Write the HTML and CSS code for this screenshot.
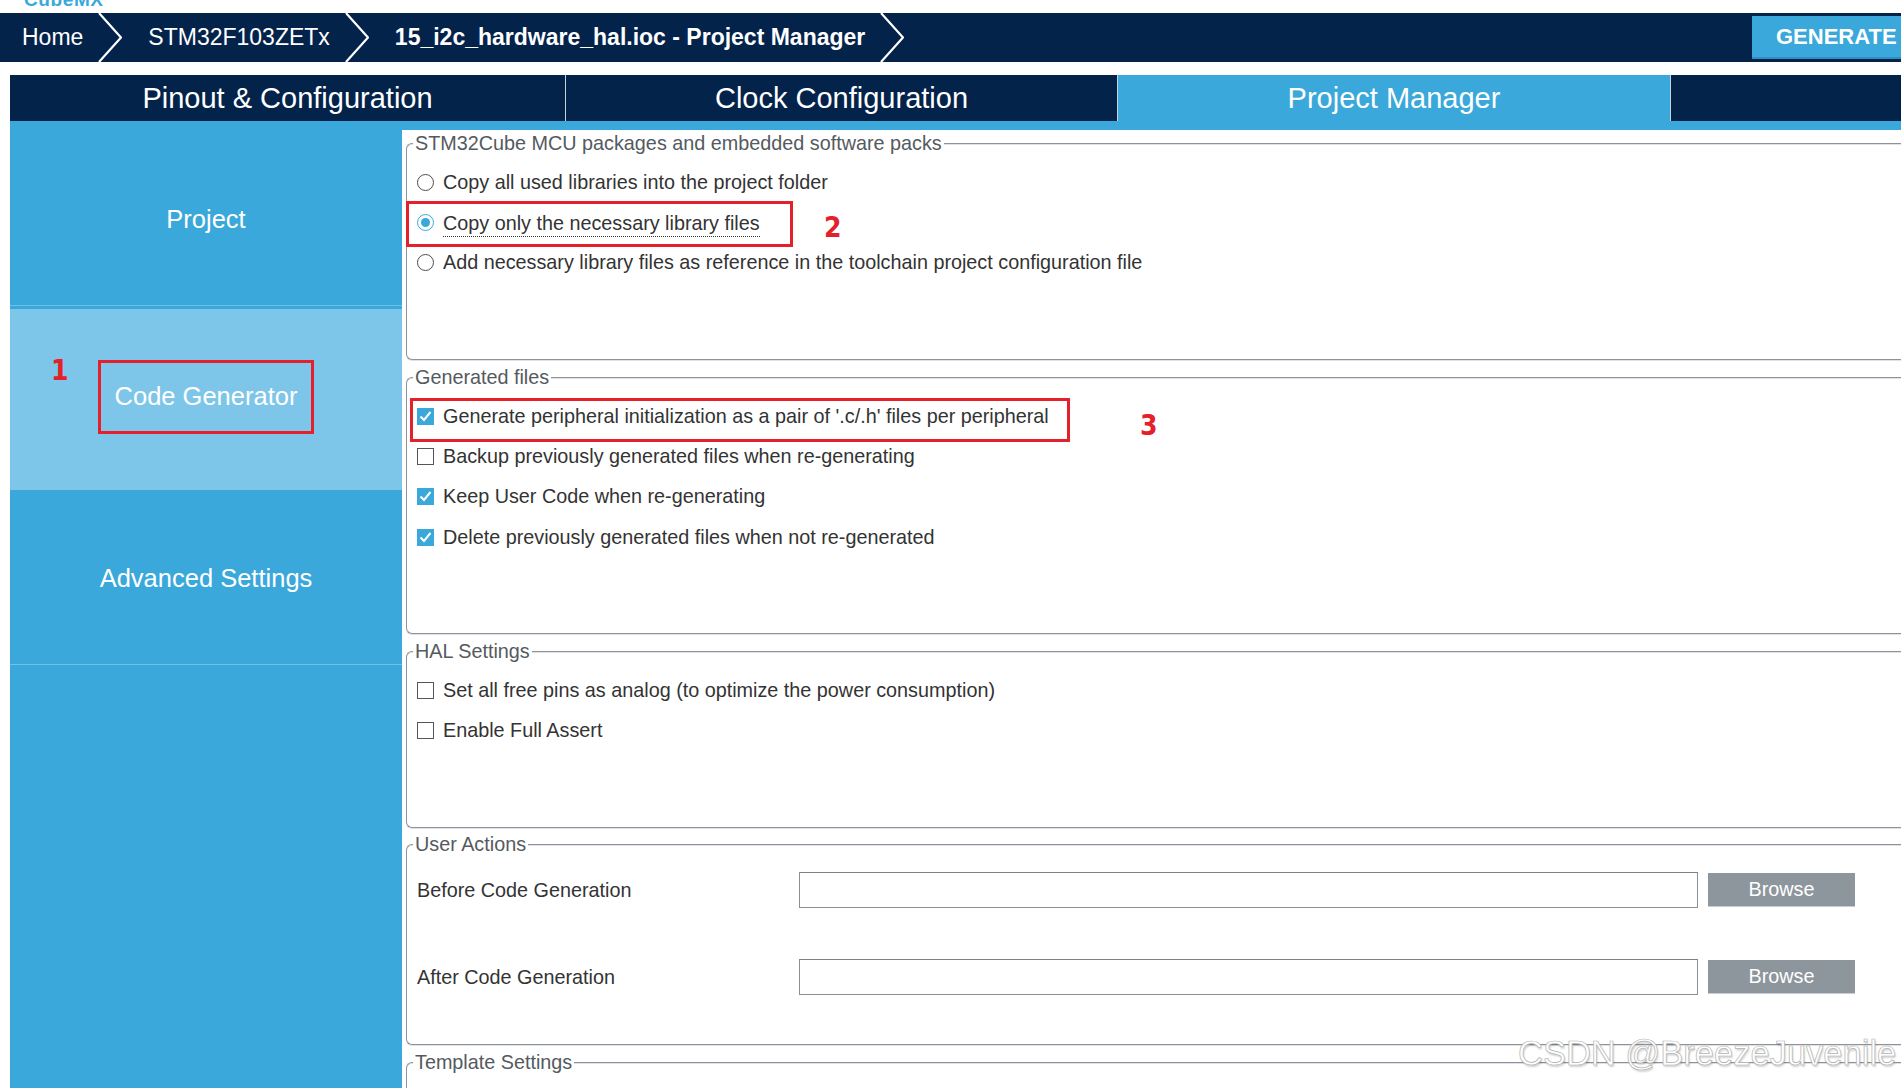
FILE: index.html
```html
<!DOCTYPE html>
<html lang="en">
<head>
<meta charset="utf-8">
<title>STM32CubeMX - Project Manager</title>
<link rel="stylesheet" href="styles.css">
</head>
<body>
<div class="logo-strip"><span class="logo">CubeMX</span></div>

<header class="crumbs">
  <div class="crumb first">Home</div>
  <svg class="chev" viewBox="0 0 24 49"><polyline points="1,0 23,24.5 1,49"/></svg>
  <div class="crumb">STM32F103ZETx</div>
  <svg class="chev" viewBox="0 0 24 49"><polyline points="1,0 23,24.5 1,49"/></svg>
  <div class="crumb current">15_i2c_hardware_hal.ioc - Project Manager</div>
  <svg class="chev" viewBox="0 0 24 49"><polyline points="1,0 23,24.5 1,49"/></svg>
  <div class="spacer"></div>
  <div class="generate">GENERATE CODE</div>
</header>

<nav class="tabs">
  <div class="tab">Pinout &amp; Configuration</div>
  <div class="tab">Clock Configuration</div>
  <div class="tab active">Project Manager</div>
  <div class="tab"></div>
</nav>
<div class="tab-strip"></div>

<main class="main">
  <aside class="sidebar">
    <div class="nav-item project">Project</div>
    <div class="nav-sep"></div>
    <div class="nav-item codegen selected">
      <span class="anno anno-1">1</span>
      <span class="hl-box">Code Generator</span>
    </div>
    <div class="nav-item advanced">Advanced Settings</div>
    <div class="nav-sep"></div>
    <div class="nav-rest"></div>
  </aside>

  <section class="content">
    <div class="group g1">
      <div class="legend">STM32Cube MCU packages and embedded software packs</div>
      <div class="opts">
        <div class="opt"><span class="radio"></span>Copy all used libraries into the project folder</div>
        <div class="opt">
          <span class="radio on"></span><span class="dotted">Copy only the necessary library files</span>
          <span class="mark mark-2"></span>
          <span class="anno anno-2">2</span>
        </div>
        <div class="opt"><span class="radio"></span>Add necessary library files as reference in the toolchain project configuration file</div>
      </div>
    </div>

    <div class="group g2">
      <div class="legend">Generated files</div>
      <div class="opts">
        <div class="opt">
          <span class="check on"><svg viewBox="0 0 17 17"><polyline points="3.5,8.5 7,12 13.5,4"/></svg></span>Generate peripheral initialization as a pair of '.c/.h' files per peripheral
          <span class="mark mark-3"></span>
          <span class="anno anno-3">3</span>
        </div>
        <div class="opt"><span class="check"></span>Backup previously generated files when re-generating</div>
        <div class="opt"><span class="check on"><svg viewBox="0 0 17 17"><polyline points="3.5,8.5 7,12 13.5,4"/></svg></span>Keep User Code when re-generating</div>
        <div class="opt"><span class="check on"><svg viewBox="0 0 17 17"><polyline points="3.5,8.5 7,12 13.5,4"/></svg></span>Delete previously generated files when not re-generated</div>
      </div>
    </div>

    <div class="group g3">
      <div class="legend">HAL Settings</div>
      <div class="opts">
        <div class="opt"><span class="check"></span>Set all free pins as analog (to optimize the power consumption)</div>
        <div class="opt"><span class="check"></span>Enable Full Assert</div>
      </div>
    </div>

    <div class="group g4">
      <div class="legend">User Actions</div>
      <div class="ua">
        <div class="ua-row">
          <span class="ua-label">Before Code Generation</span>
          <span class="ua-input"></span>
          <span class="browse">Browse</span>
        </div>
        <div class="ua-row">
          <span class="ua-label">After Code Generation</span>
          <span class="ua-input"></span>
          <span class="browse">Browse</span>
        </div>
      </div>
    </div>

    <div class="group g5">
      <div class="legend">Template Settings</div>
    </div>
  </section>
</main>

<div class="watermark">CSDN @BreezeJuvenile</div>
</body>
</html>
```

FILE: styles.css
```css
* { box-sizing: border-box; margin: 0; padding: 0; }

html, body {
  width: 1901px;
  height: 1088px;
  overflow: hidden;
  background: #ffffff;
  font-family: "Liberation Sans", Arial, sans-serif;
}

body { position: relative; }

/* top logo strip (cut off) */
.logo-strip {
  height: 13px;
  overflow: hidden;
  padding-left: 24px;
}
.logo {
  display: block;
  font-size: 19px;
  line-height: 19px;
  font-weight: bold;
  color: #39a9dc;
  margin-top: -10px;
  letter-spacing: 0.6px;
}

/* breadcrumb bar */
.crumbs {
  display: flex;
  height: 49px;
  background: #03234b;
  color: #ffffff;
  font-size: 23px;
  margin-right: -111px;
}
.crumb {
  display: flex;
  align-items: center;
  padding: 0 15px 0 26px;
  white-space: nowrap;
}
.crumb.first { padding-left: 22px; }
.crumb.current { font-weight: bold; }
.chev {
  width: 24px;
  height: 49px;
  flex: none;
}
.chev polyline {
  fill: none;
  stroke: #ffffff;
  stroke-width: 2.2;
}
.spacer { flex: 1; }
.generate {
  flex: none;
  width: 260px;
  margin: 3px 0 3px 0;
  padding-left: 24px;
  display: flex;
  align-items: center;
  background: #3aa8da;
  border-bottom: 2px solid #2e8fc0;
  font-weight: bold;
  font-size: 22px;
  white-space: nowrap;
}

/* main tabs */
.tabs {
  display: grid;
  grid-template-columns: 555px 552px 553px 1fr;
  height: 46px;
  margin: 13px 0 0 10px;
  background: #03234b;
}
.tab {
  display: flex;
  align-items: center;
  justify-content: center;
  color: #ffffff;
  font-size: 29px;
  white-space: nowrap;
}
.tab + .tab { border-left: 1px solid #c8d2dc; }
.tab.active { background: #3aa8da; }
.tab-strip {
  height: 9px;
  margin-left: 10px;
  background: #3aa8da;
}

/* main area */
.main {
  display: grid;
  grid-template-columns: 392px 1fr;
  margin-left: 10px;
  height: 958px;
}

.sidebar {
  display: flex;
  flex-direction: column;
  background: #3aa8da;
}
.nav-item {
  position: relative;
  display: flex;
  align-items: center;
  justify-content: center;
  color: #ffffff;
  font-size: 25.5px;
}
.nav-item.project { height: 175px; padding-top: 3px; }
.nav-item.codegen { height: 181px; }
.nav-item.advanced { height: 174px; padding-top: 3px; }
.nav-item.selected { background: #7ec6e9; }
.nav-sep {
  height: 4px;
  background: linear-gradient(#70c1e7 0 1.5px, #3aa8da 1.5px);
}
.nav-rest { flex: 1; }

.hl-box {
  display: flex;
  align-items: center;
  justify-content: center;
  width: 216px;
  height: 74px;
  border: 3px solid #e4202b;
  margin-top: -6px;
}

/* red annotation numbers */
.anno {
  position: absolute;
  color: #e4202b;
  font-weight: bold;
  font-size: 28px;
  line-height: 28px;
  font-family: "DejaVu Sans Condensed", "Liberation Sans", sans-serif;
}
.anno-1 { left: 41px; top: 48px; }
.anno-2 { left: 417px; top: 12px; }
.anno-3 { left: 733px; top: 16px; }

/* content groups */
.content {
  padding: 13px 0 0 4px;
  overflow: hidden;
}
.group {
  border: 1px solid #8d939a;
  border-right: 0;
  border-radius: 6px 0 0 6px;
  box-shadow: inset 0 1px 0 #dfe2e5, 0 1px 0 #dfe2e5;
  margin-bottom: 17px;
}
.g1 { height: 217px; }
.g2 { height: 257px; }
.g3 { height: 177px; margin-bottom: 16px; }
.g4 { height: 201px; }
.g5 { height: 120px; }

.legend {
  width: max-content;
  margin: -12px 0 0 6px;
  padding: 0 2px;
  background: #ffffff;
  font-size: 19.8px;
  line-height: 23px;
  color: #555a60;
}

.opts { padding-top: 7px; }
.opt {
  position: relative;
  display: flex;
  align-items: center;
  height: 40.4px;
  padding-left: 10px;
  font-size: 19.8px;
  color: #333333;
  white-space: nowrap;
}
.dotted {
  border-bottom: 1.5px dotted #333333;
  padding-bottom: 1px;
  margin-bottom: -3px;
}

.radio {
  flex: none;
  width: 17px;
  height: 17px;
  margin-right: 9px;
  border: 1.5px solid #4d4d4d;
  border-radius: 50%;
  background: #ffffff;
}
.radio.on {
  display: flex;
  align-items: center;
  justify-content: center;
  border-color: #3aa8da;
}
.radio.on::after {
  content: "";
  width: 9px;
  height: 9px;
  border-radius: 50%;
  background: #3aa8da;
}

.check {
  flex: none;
  width: 17px;
  height: 17px;
  margin-right: 9px;
  border: 1.5px solid #555555;
  background: #ffffff;
}
.check.on {
  border: 0;
  background: #3aa8da;
}
.check svg {
  display: block;
  width: 17px;
  height: 17px;
}
.check polyline {
  fill: none;
  stroke: #ffffff;
  stroke-width: 2;
}

.mark {
  position: absolute;
  border: 3px solid #e4202b;
}
.mark-2 { left: -1px; top: -1px; width: 387px; height: 46px; }
.mark-3 { left: 3px; top: 2px; width: 660px; height: 44px; }

/* user actions */
.ua { padding-top: 16px; }
.ua-row {
  display: grid;
  grid-template-columns: 372px 899px 147px;
  column-gap: 10px;
  align-items: center;
  height: 36px;
  padding-left: 10px;
  margin-bottom: 51px;
  font-size: 19.8px;
  color: #333333;
}
.ua-input {
  height: 36px;
  border: 1px solid #8a9096;
  border-top-color: #7d8288;
  background: #ffffff;
}
.browse {
  display: flex;
  align-items: center;
  justify-content: center;
  height: 34px;
  background: #8e969d;
  border-bottom: 1px solid #c9cdd1;
  color: #ffffff;
}

/* watermark */
.watermark {
  position: absolute;
  left: 1518px;
  top: 1036px;
  font-size: 34.5px;
  line-height: 34.5px;
  color: #ffffff;
  white-space: nowrap;
  -webkit-text-stroke: 0.7px #b4b4b4;
  text-shadow: 1px 2px 2px rgba(0, 0, 0, 0.18);
}
```
